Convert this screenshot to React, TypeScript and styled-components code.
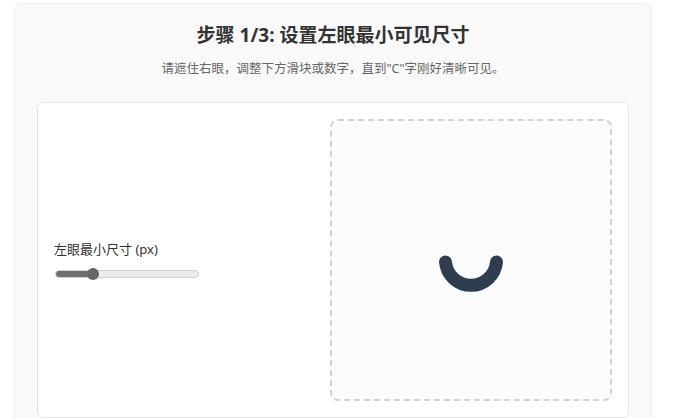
import { useState } from "react";
import styled, { createGlobalStyle } from "styled-components";

const GlobalStyle = createGlobalStyle`
  body {
    margin: 0;
    background: #ffffff;
    font-family: "Noto Sans", "Noto Sans CJK SC", sans-serif;
    color: #333;
  }
`;

const Panel = styled.section`
  margin: 3px 24px 0 14px;
  padding: 17px 22px 22px;
  background: #fafafa;
  border: 1px solid #f0f0f0;
  border-radius: 8px;
`;

const Title = styled.h2`
  margin: 0;
  font-size: 19px;
  line-height: 28px;
  font-weight: 700;
  text-align: center;
  color: #333;
`;

const Hint = styled.p`
  margin: 10px 0 0;
  font-size: 12.5px;
  line-height: 20px;
  text-align: center;
  color: #666;
`;

const Card = styled.div`
  margin-top: 23px;
  padding: 16px;
  display: grid;
  grid-template-columns: 1fr 282px;
  gap: 16px;
  background: #fff;
  border: 1px solid #e6e6e6;
  border-radius: 6px;
`;

const Controls = styled.div`
  display: flex;
  flex-direction: column;
  justify-content: center;
`;

const Label = styled.label`
  font-size: 13px;
  line-height: 18px;
  color: #333;
  margin: -2px 0 12px;
`;

const Range = styled.input`
  -webkit-appearance: none;
  appearance: none;
  width: 142px;
  height: 6px;
  margin: 0 0 0 1px;
  border: 1px solid #d0d0d0;
  border-radius: 4px;
  outline: none;

  &::-webkit-slider-thumb {
    -webkit-appearance: none;
    appearance: none;
    width: 12px;
    height: 12px;
    border-radius: 50%;
    background: #666;
    border: none;
  }
`;

const Preview = styled.div`
  height: 282px;
  box-sizing: border-box;
  display: flex;
  align-items: center;
  justify-content: center;
  border: 2px dashed #d2d2d2;
  border-radius: 8px;
  background: #fcfcfc;
`;

const LandoltC = ({ color }: { color: string }) => (
  <svg width="66" height="66" viewBox="0 0 66 66">
    <path
      d="M 7.5 35 A 25.6 25.6 0 0 0 58.5 35"
      fill="none"
      stroke={color}
      strokeWidth="13"
      strokeLinecap="round"
    />
  </svg>
);

export default function App() {
  const [size, setSize] = useState(24);
  const pct = size;

  return (
    <>
      <GlobalStyle />
      <Panel>
        <Title>步骤 1/3: 设置左眼最小可见尺寸</Title>
        <Hint>请遮住右眼，调整下方滑块或数字，直到"C"字刚好清晰可见。</Hint>
        <Card>
          <Controls>
            <Label htmlFor="left-size">左眼最小尺寸 (px)</Label>
            <Range
              id="left-size"
              type="range"
              min={0}
              max={100}
              value={size}
              onChange={e => setSize(Number(e.target.value))}
              style={{
                background: `linear-gradient(to right, #6e6e6e 0 ${pct}%, #ececec ${pct}% 100%)`,
              }}
            />
          </Controls>
          <Preview>
            <LandoltC color="#2c3e50" />
          </Preview>
        </Card>
      </Panel>
    </>
  );
}
